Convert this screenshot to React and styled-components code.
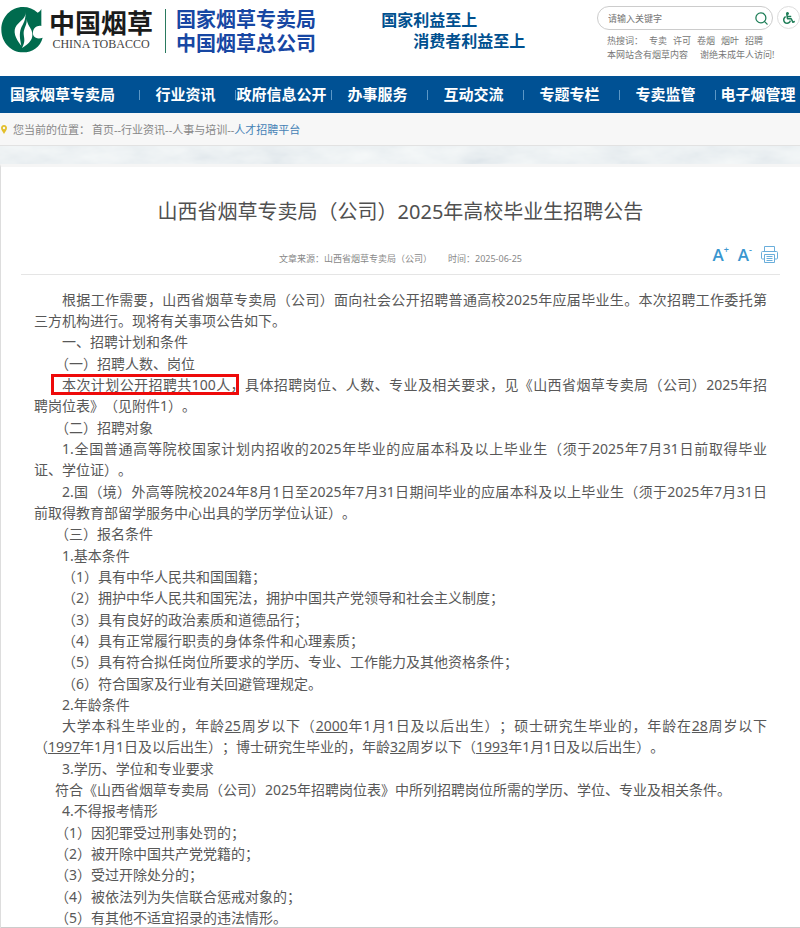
import React from "react";
import styled, { createGlobalStyle } from "styled-components";
import { FaWheelchair } from "react-icons/fa";
import { FiSearch } from "react-icons/fi";

const GlobalStyle = createGlobalStyle`
  * {
    box-sizing: border-box;
  }
  body {
    margin: 0;
    background-color: #fff;
    color: #555;
    font-family: "Noto Sans", "Noto Sans CJK SC", sans-serif;
    text-spacing-trim: space-all;
  }
  h1, p, ul {
    margin: 0;
    padding: 0;
  }
  a {
    color: inherit;
    text-decoration: none;
  }
  button, input {
    font-family: inherit;
  }
`;

const Header = styled.header`
  display: grid;
  grid-template-columns: 382fr 216fr 202fr;
  height: 76px;
  padding-top: 6px;
`;
const Brand = styled.a`
  display: flex;
  align-items: flex-start;
  white-space: nowrap;
`;
const LogoMark = styled.svg`
  width: 46px;
  height: 48px;
  flex: none;
`;
const LogoName = styled.div`
  margin-left: 3px;
  padding-right: 12px;
  height: 44px;
  margin-top: 3px;
  border-right: 1px solid #2a7a5f;
  color: #1b1b1b;
`;
const LogoChinese = styled.div`
  font-size: 26px;
  font-weight: bold;
  line-height: 28px;
`;
const LogoEnglish = styled.div`
  font-family: "Liberation Serif", serif;
  font-size: 12px;
  line-height: 14px;
  text-align: center;
  color: #444;
`;
const Bureau = styled.div`
  margin-left: 10px;
  padding-top: 2px;
  font-size: 20px;
  font-weight: bold;
  line-height: 24px;
  color: #1747a3;
`;
const Slogan = styled.div`
  padding-top: 4px;
  font-size: 16px;
  font-weight: bold;
  line-height: 21px;
  color: #00508f;
  white-space: nowrap;
`;
const SloganLine = styled.p`
  padding-left: ${(props) => (props.$indent ? "32px" : "0")};
`;

const Tools = styled.div`
  white-space: nowrap;
`;
const SearchRow = styled.form`
  display: flex;
  gap: 4px;
`;
const SearchBox = styled.div`
  display: flex;
  align-items: center;
  width: 176px;
  height: 24px;
  padding: 0 3px 0 10px;
  border: 1px solid #ccc;
  border-radius: 12px;
`;
const SearchInput = styled.input`
  flex: 1;
  min-width: 0;
  padding: 0;
  border: 0;
  outline: 0;
  background: none;
  font-size: 9px;
  &::placeholder {
    color: #757575;
    opacity: 1;
  }
`;
const IconButton = styled.button`
  display: flex;
  align-items: center;
  justify-content: center;
  padding: 0;
  border: 0;
  background: none;
  color: #1d7d57;
`;
const RoundButton = styled(IconButton)`
  width: 23px;
  height: 23px;
  flex: none;
  border: 1px solid #ddd;
  border-radius: 50%;
`;
const HotWords = styled.div`
  display: flex;
  gap: 6px;
  padding: 4px 0 0 10px;
  font-size: 9px;
  line-height: 14px;
  color: #777;
`;
const Notice = styled.p`
  && {
    padding-left: 10px;
  }
  display: flex;
  gap: 12px;
  font-size: 9px;
  line-height: 14px;
  color: #777;
`;

const NavBar = styled.nav`
  display: grid;
  grid-template-columns: 139fr repeat(6, 96fr) 85fr;
  height: 37px;
  background-color: #005194;
`;
const NavItem = styled.a`
  display: flex;
  align-items: center;
  justify-content: center;
  color: #fff;
  font-size: 15px;
  font-weight: bold;
  line-height: 35px;
  white-space: nowrap;
  &:first-child {
    justify-content: flex-start;
    padding-left: 10px;
  }
  &:not(:first-child)::before {
    content: "";
    width: 1px;
    height: 10px;
    margin-right: auto;
    background-color: #5c97c6;
  }
  &:not(:first-child)::after {
    content: "";
    margin-left: auto;
  }
  &:not(:first-child):not(:last-child) {
    padding-right: 4px;
  }
`;

const Crumbs = styled.div`
  display: flex;
  align-items: center;
  height: 33px;
  border-bottom: 1px solid #e2e2e2;
  background-color: #f7f7f7;
  font-size: 11px;
  color: #888;
`;
const Pin = styled.svg`
  width: 8px;
  height: 11px;
  margin-right: 5px;
`;
const CrumbLinks = styled.span`
  margin-left: 2px;
  a:last-child {
    color: #4481b5;
  }
`;
const Texture = styled.svg`
  display: block;
  width: 100%;
  height: 18px;
`;

const Article = styled.main`
  padding: 0 20px;
  border-left: 1px solid #ddd;
  border-top: 3px solid #f5f5f5;
  box-shadow: inset 0 -1px #ccc;
`;
const Title = styled.h1`
  padding-top: 30px;
  font-size: 20px;
  font-weight: normal;
  line-height: 30px;
  text-align: center;
  color: #505050;
`;
const Meta = styled.div`
  display: grid;
  grid-template-columns: 1fr auto 1fr;
  align-items: center;
  height: 48px;
  border-bottom: 1px solid #e5e5e5;
`;
const MetaText = styled.div`
  grid-column: 2;
  display: flex;
  gap: 16px;
  padding-top: 16px;
  font-size: 9px;
  line-height: 14px;
  color: #888;
`;
const MetaTools = styled.div`
  display: flex;
  align-items: center;
  justify-content: flex-end;
  gap: 9px;
  padding: 8px 2px 0 0;
`;
const SizeButton = styled(IconButton)`
  align-items: flex-start;
  font-family: "Open Sans", sans-serif;
  font-size: 17px;
  font-weight: 600;
  line-height: 20px;
  color: #3a96cf;
  sup {
    font-size: 9px;
    line-height: 9px;
  }
`;

const Body = styled.div`
  display: grid;
  gap: 1px;
  padding: 14px 13px 0;
  font-size: 14px;
  line-height: 21px;
  color: #585858;
`;
const Paragraph = styled.p`
  text-indent: ${(props) => props.$indent || 28}px;
`;
const Line = styled.span`
  display: block;
  white-space: nowrap;
  text-align-last: justify;
  & + & {
    text-indent: 0;
  }
  &:last-child {
    text-align-last: left;
  }
`;
const Marked = styled.strong`
  position: relative;
  font-weight: normal;
  &::before {
    content: "";
    position: absolute;
    inset: -1px -8px -1px -11px;
    border: 3px solid #ee0a0a;
  }
`;

const navItems = [
  "国家烟草专卖局",
  "行业资讯",
  "政府信息公开",
  "办事服务",
  "互动交流",
  "专题专栏",
  "专卖监管",
  "电子烟管理",
];
const hotWords = ["专卖", "许可", "卷烟", "烟叶", "招聘"];

function Logo() {
  return (
    <LogoMark viewBox="0 0 138 144" aria-hidden="true">
      <path
        fill="#006b4e"
        d="M113 20C101 9 86 3 69 3C33 3 4 33 4 71s29 68 65 68c29 0 52-16 59-44c-10 4-22 3-27-5c-6-10 0-26 11-29c4-2 8-2 12-1V9c-3 5-6 9-11 11z"
      />
      <path fill="#fff" d="M76 18C78 37 64 41 50 58C37 75 46 98 64 119C60 99 57 84 63 67C68 54 79 44 76 18z" />
      <path fill="#fff" d="M80 38C82 56 72 65 71 79C70 94 79 103 66 126C89 112 101 99 96 78C93 63 82 59 80 38z" />
    </LogoMark>
  );
}

function PrinterIcon() {
  return (
    <svg width="17" height="17" viewBox="0 0 17 17" fill="none" stroke="#6aaedb" aria-hidden="true">
      <path d="M3.5 5.500V.5H13.500V5.500M3.500 13H1.500Q.5 13 .5 12V6.500Q.5 5.500 1.500 5.500H15.500Q16.500 5.500 16.500 6.500V12Q16.500 13 15.500 13H13.500" />
      <path d="M3.500 8.500H13.500V16.500H3.500zM5.500 10.500H11.500M5.500 12.500H11.500M5.500 14.500H11.500" />
    </svg>
  );
}

function MarbleStrip() {
  return (
    <Texture aria-hidden="true">
      <filter id="marble" x="0" y="0" width="100%" height="100%">
        <feTurbulence type="fractalNoise" baseFrequency="0.02 0.05" numOctaves="4" seed="7" />
        <feColorMatrix values="0.16 0 0 0 0.81  0.13 0 0 0 0.85  0.1 0 0 0 0.88  0 0 0 0 1" colorInterpolationFilters="sRGB" />
      </filter>
      <rect width="100%" height="18" fill="#e3e8ed" />
      <rect width="100%" height="18" filter="url(#marble)" style={{ colorInterpolationFilters: "sRGB" }} />
    </Texture>
  );
}

function SiteHeader() {
  return (
    <Header>
      <Brand href="#">
        <Logo />
        <LogoName>
          <LogoChinese>中国烟草</LogoChinese>
          <LogoEnglish>CHINA TOBACCO</LogoEnglish>
        </LogoName>
        <Bureau>
          <div>国家烟草专卖局</div>
          <div>中国烟草总公司</div>
        </Bureau>
      </Brand>
      <Slogan>
        <SloganLine>国家利益至上</SloganLine>
        <SloganLine $indent>消费者利益至上</SloganLine>
      </Slogan>
      <Tools>
        <SearchRow>
          <SearchBox>
            <SearchInput type="text" placeholder="请输入关键字" aria-label="请输入关键字" />
            <IconButton type="button" aria-label="搜索">
              <FiSearch size={15} />
            </IconButton>
          </SearchBox>
          <RoundButton type="button" aria-label="无障碍">
            <FaWheelchair size={12} />
          </RoundButton>
        </SearchRow>
        <HotWords>
          <span>热搜词：</span>
          {hotWords.map((word) => (
            <a href="#" key={word}>{word}</a>
          ))}
        </HotWords>
        <Notice>
          <span>本网站含有烟草内容</span>
          <span>谢绝未成年人访问!</span>
        </Notice>
      </Tools>
    </Header>
  );
}

function Announcement() {
  return (
    <Body>
      <section>
        <Paragraph>
          <Line>根据工作需要，山西省烟草专卖局（公司）面向社会公开招聘普通高校2025年应届毕业生。本次招聘工作委托第</Line>
          <Line>三方机构进行。现将有关事项公告如下。</Line>
        </Paragraph>
        <Paragraph>一、招聘计划和条件</Paragraph>
      </section>
      <section>
        <Paragraph $indent={21}>（一）招聘人数、岗位</Paragraph>
        <Paragraph>
          <Line>
            <Marked>本次计划公开招聘共100人</Marked>，具体招聘岗位、人数、专业及相关要求，见《山西省烟草专卖局（公司）2025年招
          </Line>
          <Line>聘岗位表》（见附件1）。</Line>
        </Paragraph>
      </section>
      <section>
        <Paragraph $indent={21}>（二）招聘对象</Paragraph>
        <Paragraph>
          <Line>1.全国普通高等院校国家计划内招收的2025年毕业的应届本科及以上毕业生（须于2025年7月31日前取得毕业</Line>
          <Line>证、学位证）。</Line>
        </Paragraph>
      </section>
      <section>
        <Paragraph>
          <Line>2.国（境）外高等院校2024年8月1日至2025年7月31日期间毕业的应届本科及以上毕业生（须于2025年7月31日</Line>
          <Line>前取得教育部留学服务中心出具的学历学位认证）。</Line>
        </Paragraph>
        <Paragraph $indent={21}>（三）报名条件</Paragraph>
      </section>
      <section>
        <Paragraph>1.基本条件</Paragraph>
        <Paragraph>（1）具有中华人民共和国国籍；</Paragraph>
        <Paragraph>（2）拥护中华人民共和国宪法，拥护中国共产党领导和社会主义制度；</Paragraph>
      </section>
      <section>
        <Paragraph>（3）具有良好的政治素质和道德品行；</Paragraph>
        <Paragraph>（4）具有正常履行职责的身体条件和心理素质；</Paragraph>
        <Paragraph>（5）具有符合拟任岗位所要求的学历、专业、工作能力及其他资格条件；</Paragraph>
      </section>
      <section>
        <Paragraph>（6）符合国家及行业有关回避管理规定。</Paragraph>
        <Paragraph>2.年龄条件</Paragraph>
        <Paragraph>
          <Line>
            大学本科生毕业的，年龄<u>25</u>周岁以下（<u>2000</u>年1月1日及以后出生）；硕士研究生毕业的，年龄在<u>28</u>周岁以下
          </Line>
          <Line>
            （<u>1997</u>年1月1日及以后出生）；博士研究生毕业的，年龄<u>32</u>周岁以下（<u>1993</u>年1月1日及以后出生）。
          </Line>
        </Paragraph>
      </section>
      <section>
        <Paragraph>3.学历、学位和专业要求</Paragraph>
        <Paragraph $indent={21}>符合《山西省烟草专卖局（公司）2025年招聘岗位表》中所列招聘岗位所需的学历、学位、专业及相关条件。</Paragraph>
        <Paragraph>4.不得报考情形</Paragraph>
      </section>
      <section>
        <Paragraph $indent={21}>（1）因犯罪受过刑事处罚的；</Paragraph>
        <Paragraph $indent={21}>（2）被开除中国共产党党籍的；</Paragraph>
        <Paragraph $indent={21}>（3）受过开除处分的；</Paragraph>
      </section>
      <section>
        <Paragraph $indent={21}>（4）被依法列为失信联合惩戒对象的；</Paragraph>
        <Paragraph $indent={21}>（5）有其他不适宜招录的违法情形。</Paragraph>
      </section>
    </Body>
  );
}

function App() {
  return (
    <>
      <GlobalStyle />
      <SiteHeader />
      <NavBar>
        {navItems.map((item) => (
          <NavItem href="#" key={item}>{item}</NavItem>
        ))}
      </NavBar>
      <Crumbs>
        <Pin viewBox="0 0 8 11" aria-hidden="true">
          <path fill="#e3bf2c" d="M4 1C2 1 1 2.500 1 4C1 6 3 8 4 10C5 8 7 6 7 4C7 2.500 6 1 4 1z" />
          <circle cx="4" cy="4" r="1.200" fill="#f7f7f7" />
        </Pin>
        <span>您当前的位置：</span>
        <CrumbLinks>
          <a href="#">首页</a>--<a href="#">行业资讯</a>--<a href="#">人事与培训</a>--<a href="#">人才招聘平台</a>
        </CrumbLinks>
      </Crumbs>
      <MarbleStrip />
      <Article>
        <Title>山西省烟草专卖局（公司）2025年高校毕业生招聘公告</Title>
        <Meta>
          <MetaText>
            <span>文章来源：山西省烟草专卖局（公司）</span>
            <span>时间：2025-06-25</span>
          </MetaText>
          <MetaTools>
            <SizeButton type="button" aria-label="放大字体">A<sup>+</sup></SizeButton>
            <SizeButton type="button" aria-label="缩小字体">A<sup>-</sup></SizeButton>
            <IconButton type="button" aria-label="打印">
              <PrinterIcon />
            </IconButton>
          </MetaTools>
        </Meta>
        <Announcement />
      </Article>
    </>
  );
}

export default App;
